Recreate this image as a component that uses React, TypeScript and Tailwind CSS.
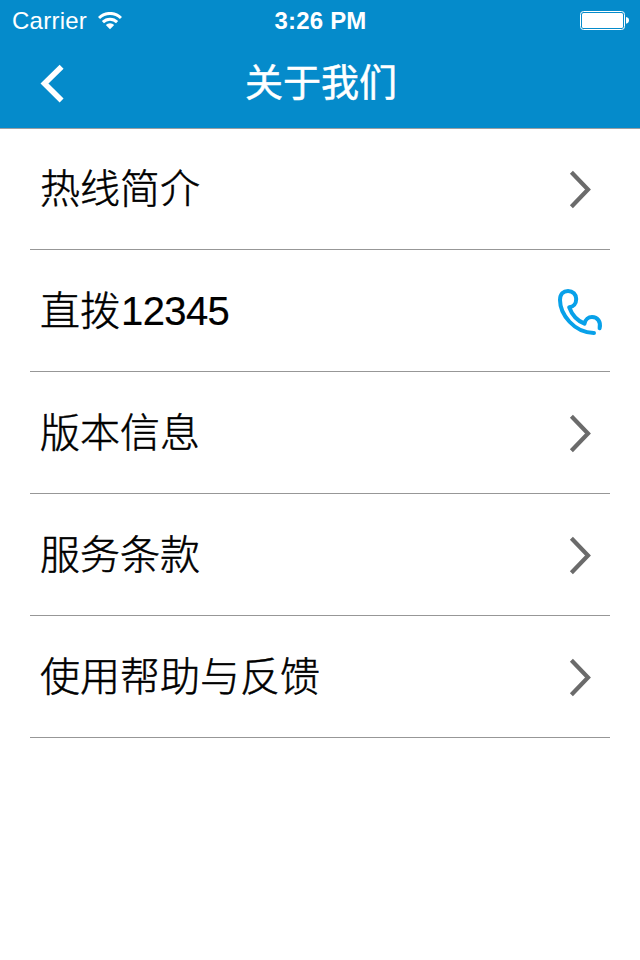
import type { ReactNode } from "react";

type RowIcon = "chevron" | "phone";

interface MenuItem {
  label: string;
  number?: string;
  icon: RowIcon;
}

const items: MenuItem[] = [
  { label: "热线简介", icon: "chevron" },
  { label: "直拨", number: "12345", icon: "phone" },
  { label: "版本信息", icon: "chevron" },
  { label: "服务条款", icon: "chevron" },
  { label: "使用帮助与反馈", icon: "chevron" },
];

const icons: Record<RowIcon, ReactNode> = {
  chevron: (
    <svg viewBox="0 0 24 40" fill="none" stroke="#6b6b6b" strokeWidth="4.2" className="mr-[18px] h-10 w-6">
      <path d="M3.4 3.3 L20 20.5 L3.4 37.7" />
    </svg>
  ),
  phone: (
    <svg
      viewBox="0 0 48 48"
      fill="none"
      stroke="#08a1e9"
      strokeWidth="4"
      strokeLinecap="round"
      strokeLinejoin="round"
      className="mr-[6px] h-12 w-12"
    >
      <path d="M38 45.9 C18 46 4 27 4 13 C4 7 7.5 4 12 4 C16.8 4 20.2 7.4 20.2 12 C20.2 16.5 17.5 19.8 13.2 20.2 C16 28 21 33.5 28.5 36.7 C29.3 32.3 32.5 30 36 30 C41.5 30 45.3 35 43.6 41.2" />
    </svg>
  ),
};

function StatusBar() {
  return (
    <div className="flex h-10 items-center justify-between pr-[11px] pl-3 text-2xl leading-none">
      <div className="flex w-[200px] items-center gap-[11px] pt-[2px]">
        <span className="tracking-[0.25px]">Carrier</span>
        <svg viewBox="0 0 24 18" className="h-[18px] w-6">
          <g fill="none" stroke="white" strokeWidth="3">
            <path d="M1 6 A15.5 15.5 0 0 1 23 6" />
            <path d="M4.9 10.1 A10 10 0 0 1 19.1 10.1" />
          </g>
          <path d="M7.8 13 A6 6 0 0 1 16.2 13 L12 17.3 Z" fill="white" />
        </svg>
      </div>
      <span className="pt-[2px] font-bold tracking-[0.2px]">3:26 PM</span>
      <div className="flex w-[200px] justify-end">
        <svg viewBox="0 0 49 20" className="h-5 w-[49px]">
          <rect x="0.5" y="1.5" width="44" height="18" rx="3" fill="none" stroke="white" />
          <rect x="2" y="3" width="41" height="15" rx="1.5" fill="white" />
          <path d="M46 7 Q49 7.5 49 10.2 Q49 13 46 13.8 Z" fill="white" />
        </svg>
      </div>
    </div>
  );
}

function NavBar() {
  return (
    <div className="grid h-[88px] grid-cols-[80px_1fr_80px] items-center">
      <button type="button" aria-label="返回" className="pl-10">
        <svg viewBox="0 0 24 40" fill="none" stroke="white" strokeWidth="5.6" className="h-10 w-6">
          <path d="M21.6 2.8 L4.5 19.6 L21.6 36.4" />
        </svg>
      </button>
      <h1 className="pb-[2px] pl-[2px] text-center text-[38px] leading-none font-normal [-webkit-text-stroke:0.5px_white]">
        关于我们
      </h1>
    </div>
  );
}

export default function App() {
  return (
    <div className="h-[960px] w-[640px] bg-white font-['Liberation_Sans','Noto_Sans_CJK_SC',sans-serif] text-black">
      <header className="h-[129px] border-b border-[#9a9fa3] bg-[#058bcb] text-white">
        <StatusBar />
        <NavBar />
      </header>
      <ul className="px-[30px]">
        {items.map((item) => (
          <li
            key={item.label}
            className="flex h-[122px] items-center justify-between border-b border-[#979797] pl-[10px] text-[40px] leading-none first:h-[121px]"
          >
            <span className="font-light [-webkit-text-stroke:0.5px_black]">
              {item.label}
              {item.number && (
                <span className="pl-px tracking-[-0.6px] [-webkit-text-stroke:0.2px_black]">{item.number}</span>
              )}
            </span>
            {icons[item.icon]}
          </li>
        ))}
      </ul>
    </div>
  );
}
